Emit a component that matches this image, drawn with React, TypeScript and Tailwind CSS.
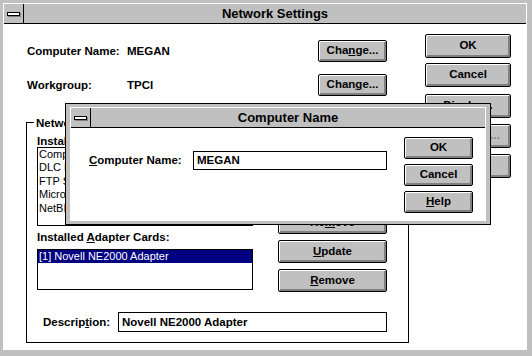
import type { ReactNode } from "react"

const GRAY = "bg-[#c0c0c0]"

function Btn({ children, className = "", disabled = false }: { children: ReactNode; className?: string; disabled?: boolean }) {
    return (
        <div
            className={`flex items-center justify-center rounded-[2px] border border-black ${GRAY} text-[11.5px] font-bold shadow-[inset_1px_1px_0_#fff,inset_-2px_-2px_0_#808080] ${disabled ? "text-[#808080]" : "text-black"} ${className}`}
        >
            {children}
        </div>
    )
}

function TitleBar({ title }: { title: string }) {
    return (
        <div className={`flex h-[20px] shrink-0 border-b border-black ${GRAY}`}>
            <div className="flex w-[20px] shrink-0 items-center justify-center border-r border-black">
                <div className="h-[4px] w-[13px] border border-black bg-white shadow-[1px_1px_0_#808080]" />
            </div>
            <div className="flex-1 text-center text-[13px] font-bold leading-[19px]">{title}</div>
        </div>
    )
}

const COMPONENTS = ["Compatible Network Drivers", "DLC Protocol", "FTP Software PC/TCP", "Microsoft NetBEUI", "NetBIOS Support"]

export default function App() {
    return (
        <div className={`relative h-[356px] w-[532px] overflow-hidden ${GRAY} pb-[6px] pl-[3px] pr-[5px] pt-[3px] font-['Liberation_Sans',Arial,sans-serif] text-black`}>
            <div className="flex h-full flex-col bg-white p-[1px]">
                <TitleBar title="Network Settings" />

                <div className="flex flex-1 pl-[22px] pt-[10px]">
                    {/* left side */}
                    <div className="flex w-[383px] flex-col pt-[6px]">
                        <div className="flex h-[22px] w-[361px] items-center pl-[1px] text-[11.5px] font-bold">
                            <span className="w-[100px] pt-[2px]">Computer Name:</span>
                            <span className="pt-[2px]">MEGAN</span>
                            <Btn className="ml-auto h-[22px] w-[69px]">
                                <span>
                                    Cha<span className="underline">n</span>ge...
                                </span>
                            </Btn>
                        </div>
                        <div className="mt-[12px] flex h-[22px] w-[361px] items-center pl-[1px] text-[11.5px] font-bold">
                            <span className="w-[100px] pt-[2px]">Workgroup:</span>
                            <span className="pt-[2px]">TPCI</span>
                            <Btn className="ml-auto h-[22px] w-[69px]">
                                <span>
                                    Chan<span className="underline">g</span>e...
                                </span>
                            </Btn>
                        </div>

                        {/* group box */}
                        <div className="relative mt-[26px] flex h-[221px] w-[383px] flex-col border border-black pl-[10px]">
                            <span className="absolute -top-[7px] left-[7px] bg-white px-[2px] text-[11.5px] font-bold leading-[14px]">
                                Network Drivers
                            </span>
                            <div className="flex">
                                <div className="flex w-[216px] flex-col">
                                    <div className="mt-[13px] whitespace-nowrap text-[11.5px] font-bold leading-[11px]">
                                        Installed Network <span className="underline">C</span>omponents:
                                    </div>
                                    <div className="h-[79px] overflow-hidden border border-black pl-[1px] text-[11px] leading-[13.4px]">
                                        {COMPONENTS.map((c) => (
                                            <div key={c} className="whitespace-nowrap">{c}</div>
                                        ))}
                                    </div>
                                    <div className="mt-[4px] whitespace-nowrap text-[11.5px] font-bold leading-[14px]">
                                        Installed <span className="underline">A</span>dapter Cards:
                                    </div>
                                    <div className="mt-[5px] h-[41px] border border-black text-[11px] leading-[13px]">
                                        <div className="bg-[#000080] pl-[1px] text-white">[1] Novell NE2000 Adapter</div>
                                    </div>
                                </div>
                                <div className="ml-[25px] flex w-[109px] flex-col gap-[6px] pt-[30px]">
                                    <Btn className="h-[23px]">
                                        <span><span className="underline">A</span>dd...</span>
                                    </Btn>
                                    <Btn className="h-[23px]">
                                        <span><span className="underline">S</span>etup...</span>
                                    </Btn>
                                    <Btn className="h-[23px]">
                                        <span>Re<span className="underline">m</span>ove</span>
                                    </Btn>
                                    <Btn className="h-[23px]">
                                        <span><span className="underline">U</span>pdate</span>
                                    </Btn>
                                    <Btn className="h-[23px]">
                                        <span><span className="underline">R</span>emove</span>
                                    </Btn>
                                </div>
                            </div>
                            <div className="mt-[20px] flex items-center pl-[6px] text-[11.5px] font-bold">
                                <span className="w-[75px] pt-[2px]">
                                    Descrip<span className="underline">t</span>ion:
                                </span>
                                <div className="flex h-[20px] w-[269px] items-center border border-black pl-[3px] pt-[1px]">
                                    Novell NE2000 Adapter
                                </div>
                            </div>
                        </div>
                    </div>

                    {/* right buttons */}
                    <div className="ml-[16px] flex w-[86px] flex-col">
                        <Btn className="h-[24px]">OK</Btn>
                        <Btn className="mt-[5px] h-[24px]">Cancel</Btn>
                        <Btn className="mt-[7px] h-[24px]">Display...</Btn>
                        <Btn className="mt-[6px] h-[24px]" disabled>Password...</Btn>
                        <Btn className="mt-[6px] h-[24px]">
                            <span><span className="underline">H</span>elp</span>
                        </Btn>
                    </div>
                </div>
            </div>

            {/* Computer Name dialog over the settings window */}
            <div className={`absolute left-[65px] top-[103px] flex h-[122px] w-[426px] flex-col border border-black ${GRAY} px-[4px] py-[3px]`}>
                <div className="flex flex-1 flex-col bg-white p-[1px]">
                    <TitleBar title="Computer Name" />
                    <div className="flex flex-1 pl-[18px]">
                        <div className="mt-[23px] flex h-[19px] items-center text-[11.5px] font-bold">
                            <span className="w-[104px]">
                                <span className="underline">C</span>omputer Name:
                            </span>
                            <div className="flex h-[19px] w-[194px] items-center border border-black pl-[3px]">MEGAN</div>
                        </div>
                        <div className="ml-[17px] mt-[9px] flex w-[69px] flex-col gap-[5px]">
                            <Btn className="h-[22px]">OK</Btn>
                            <Btn className="h-[22px]">Cancel</Btn>
                            <Btn className="h-[22px]">
                                <span><span className="underline">H</span>elp</span>
                            </Btn>
                        </div>
                    </div>
                </div>
            </div>
        </div>
    )
}
